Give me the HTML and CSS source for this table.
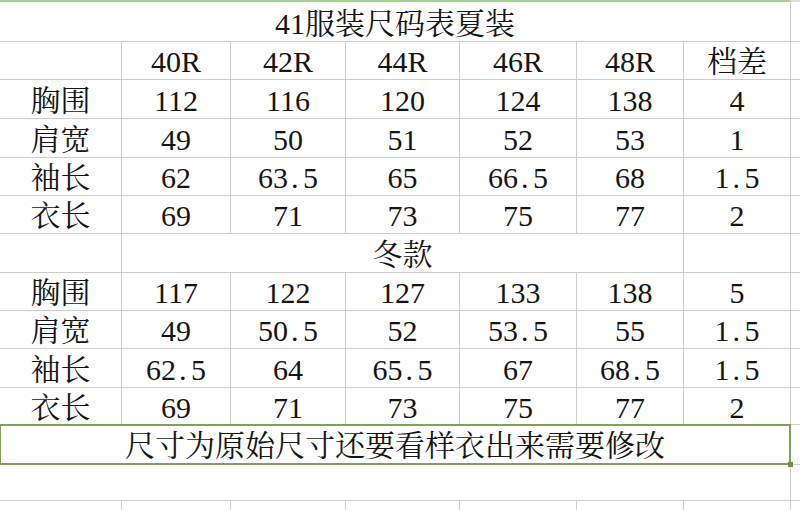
FILE: index.html
```html
<!DOCTYPE html>
<html lang="zh-CN">
<head>
<meta charset="utf-8">
<title>41服装尺码表夏装</title>
<link rel="stylesheet" href="styles.css">
</head>
<body>
<div class="sheet">
  <div class="c title span7">41服装尺码表夏装</div>
  <div class="c edge top"></div>

  <div class="c"></div>
  <div class="c">40R</div>
  <div class="c">42R</div>
  <div class="c">44R</div>
  <div class="c">46R</div>
  <div class="c">48R</div>
  <div class="c">档差</div>
  <div class="c edge"></div>

  <div class="c">胸围</div>
  <div class="c">112</div>
  <div class="c">116</div>
  <div class="c">120</div>
  <div class="c">124</div>
  <div class="c">138</div>
  <div class="c">4</div>
  <div class="c edge"></div>

  <div class="c">肩宽</div>
  <div class="c">49</div>
  <div class="c">50</div>
  <div class="c">51</div>
  <div class="c">52</div>
  <div class="c">53</div>
  <div class="c">1</div>
  <div class="c edge"></div>

  <div class="c">袖长</div>
  <div class="c">62</div>
  <div class="c">63<span class="pt">.</span>5</div>
  <div class="c">65</div>
  <div class="c">66<span class="pt">.</span>5</div>
  <div class="c">68</div>
  <div class="c">1<span class="pt">.</span>5</div>
  <div class="c edge"></div>

  <div class="c">衣长</div>
  <div class="c">69</div>
  <div class="c">71</div>
  <div class="c">73</div>
  <div class="c">75</div>
  <div class="c">77</div>
  <div class="c">2</div>
  <div class="c edge"></div>

  <div class="c"></div>
  <div class="c span5">冬款</div>
  <div class="c"></div>
  <div class="c edge"></div>

  <div class="c">胸围</div>
  <div class="c">117</div>
  <div class="c">122</div>
  <div class="c">127</div>
  <div class="c">133</div>
  <div class="c">138</div>
  <div class="c">5</div>
  <div class="c edge"></div>

  <div class="c">肩宽</div>
  <div class="c">49</div>
  <div class="c">50<span class="pt">.</span>5</div>
  <div class="c">52</div>
  <div class="c">53<span class="pt">.</span>5</div>
  <div class="c">55</div>
  <div class="c">1<span class="pt">.</span>5</div>
  <div class="c edge"></div>

  <div class="c">袖长</div>
  <div class="c">62<span class="pt">.</span>5</div>
  <div class="c">64</div>
  <div class="c">65<span class="pt">.</span>5</div>
  <div class="c">67</div>
  <div class="c">68<span class="pt">.</span>5</div>
  <div class="c">1<span class="pt">.</span>5</div>
  <div class="c edge"></div>

  <div class="c">衣长</div>
  <div class="c">69</div>
  <div class="c">71</div>
  <div class="c">73</div>
  <div class="c">75</div>
  <div class="c">77</div>
  <div class="c">2</div>
  <div class="c edge"></div>

  <div class="c note span7">尺寸为原始尺寸还要看样衣出来需要修改</div>
  <div class="c edge"></div>

  <div class="c span7"></div>
  <div class="c edge"></div>

  <div class="c"></div>
  <div class="c"></div>
  <div class="c"></div>
  <div class="c"></div>
  <div class="c"></div>
  <div class="c"></div>
  <div class="c"></div>
  <div class="c edge"></div>
</div>
</body>
</html>
```

FILE: styles.css
```css
html, body {
  margin: 0;
  padding: 0;
  background: #ffffff;
}

.sheet {
  display: grid;
  grid-template-columns: 121px 108px 114px 113px 116px 106px 106px 20px;
  grid-template-rows: 41px 37px 38px 38px 37px 37px 38px 37px 37px 38px 36px 39px 35px 20px;
  gap: 1px;
  background: #cdcdcd;
  width: 800px;
  height: 510px;
  overflow: hidden;
  font-family: "Liberation Serif", "Noto Serif CJK SC", serif;
  font-size: 30px;
  line-height: 1;
  color: #151515;
}

.c {
  font-family: "Liberation Serif", "Noto Serif CJK SC", serif;
  background: #ffffff;
  display: flex;
  align-items: center;
  justify-content: center;
  padding-top: 3px;
  box-sizing: border-box;
  white-space: nowrap;
}

.span7 { grid-column: span 7; }
.span5 { grid-column: span 5; }

.title {
  border-top: 2px solid #a9d18e;
  padding-top: 4px;
}

.edge.top {
  border-top: 2px solid #dcdcdc;
}

.pt {
  display: inline-block;
  width: 0.5em;
  padding-left: 0.1em;
  box-sizing: border-box;
  text-align: left;
}

.note {
  position: relative;
  margin: -1px;
  border: 2px solid #85a05a;
  padding-top: 2px;
}

.note::after {
  content: "";
  position: absolute;
  right: -4px;
  bottom: -4px;
  width: 5px;
  height: 5px;
  background: #6f8c48;
}
```
